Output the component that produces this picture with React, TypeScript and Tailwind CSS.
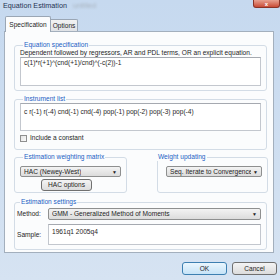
import { ReactNode } from "react";

function Group({
  label,
  className,
  legendClass,
  children,
}: {
  label: string;
  className?: string;
  legendClass?: string;
  children: ReactNode;
}) {
  return (
    <fieldset className={`border border-[#d3dce6] rounded-[3px] px-[5px] ${className ?? ""}`}>
      <legend className={`px-[1px] leading-[8px] text-[#1b5fc4] ${legendClass ?? "ml-[3px]"}`}>{label}</legend>
      {children}
    </fieldset>
  );
}

function Select({ value, className }: { value: string; className?: string }) {
  return (
    <div
      className={`flex items-center justify-between border border-[#8e8f8f] rounded-[2px] bg-gradient-to-b from-[#f3f3f3] to-[#dcdcdc] pl-[3px] pr-[3px] overflow-hidden whitespace-nowrap ${className ?? ""}`}
    >
      <span className="overflow-hidden min-w-0">{value}</span>
      <span className="text-[5px] text-[#222] pl-[2px] shrink-0">▼</span>
    </div>
  );
}

function Field({ text, className }: { text?: string; className?: string }) {
  return (
    <div
      className={`bg-white border border-[#c3c7ce] border-t-[#a5a9b0] pl-[3px] pt-[1px] whitespace-nowrap overflow-hidden ${className ?? ""}`}
    >
      {text}
    </div>
  );
}

export default function App() {
  return (
    <div className="w-[280px] h-[280px] overflow-hidden flex flex-col bg-gradient-to-b from-[#c6d9ef] to-[#d6e3f2] font-['Liberation_Sans',Arial,sans-serif] text-[6.6px] leading-[8px] text-[#1e1e1e]">
      <div className="h-[13px] flex justify-between items-start">
        <div className="pl-[3px] pt-[2px] text-[7.2px] text-[#1f3350] whitespace-nowrap">
          Equation Estimation <span className="ml-[4px] text-[#a9b4c0] blur-[1px]">untitled</span>
        </div>
        <div className="w-[27px] h-[8px] rounded-b-[3px] border border-t-0 border-[#8a3327] bg-gradient-to-b from-[#e7a090] to-[#c84a35] flex items-center justify-center text-white text-[6px] leading-[6px] font-bold">
          x
        </div>
      </div>

      <div className="pl-[4px] pt-[3px]">
        <div className="flex items-end h-[15px] pl-[1px]">
          <div className="relative z-10 -mb-px h-[16px] w-[46px] bg-[#fbfcfd] border border-b-0 border-[#9aa6b4] rounded-t-[2px] flex items-center justify-center">
            Specification
          </div>
          <div className="h-[12px] w-[27px] bg-gradient-to-b from-[#f2f2f2] to-[#dfe2e6] border border-b-0 border-l-0 border-[#9aa6b4] rounded-tr-[2px] flex items-center justify-center">
            Options
          </div>
        </div>
        <div className="w-[270px] h-[222px] border border-[#a3afbd] bg-[#fbfcfd] pl-[9px] pt-[9px]">
          <Group label="Equation specification" className="w-[253px] pb-[4px]">
            <div className="whitespace-nowrap">Dependent followed by regressors, AR and PDL terms, OR an explicit equation.</div>
            <Field text="c(1)*r(+1)^(cnd(+1)/cnd)^(-c(2))-1" className="h-[29px] w-[241px]" />
          </Group>

          <Group label="Instrument list" className="w-[253px] mt-[4px] pb-[7px]">
            <Field text="c  r(-1) r(-4) cnd(-1) cnd(-4) pop(-1) pop(-2) pop(-3) pop(-4)" className="h-[28px] w-[241px] pt-[4px]" />
            <div className="flex items-center mt-[3px]">
              <div className="w-[7px] h-[7px] border border-[#8f8f8f] bg-gradient-to-br from-[#e3e3e3] to-[#fbfbfb]" />
              <span className="ml-[3px]">Include a constant</span>
            </div>
          </Group>

          <div className="flex mt-[3px]">
            <Group label="Estimation weighting matrix" className="w-[112px] h-[40px]">
              <Select value="HAC (Newey-West)" className="w-[101px] h-[11px] mt-[5px]" />
              <div className="ml-[21px] mt-[2px] w-[51px] h-[12px] border border-[#707070] rounded-[3px] bg-gradient-to-b from-[#f4f4f4] to-[#dddddd] flex items-center justify-center">
                HAC options
              </div>
            </Group>
            <Group label="Weight updating" className="w-[111px] h-[40px] ml-[30px]" legendClass="-ml-[6px]">
              <Select value="Seq. Iterate to Convergence" className="w-[96px] h-[11px] mt-[5px] ml-[3px]" />
            </Group>
          </div>

          <Group label="Estimation settings" className="w-[253px] mt-[5px] pb-[4px] pl-[2px]">
            <div className="flex items-center mt-[2px]">
              <span className="w-[31px]">Method:</span>
              <Select value="GMM  -  Generalized Method of Moments" className="w-[213px] h-[12px]" />
            </div>
            <div className="flex items-center mt-[4px]">
              <span className="w-[31px]">Sample:</span>
              <Field text="1961q1 2005q4" className="w-[213px] h-[21px] pt-[3px]" />
            </div>
          </Group>
        </div>
      </div>

      <div className="flex justify-end gap-[5px] pr-[3px] mt-[9px]">
        <div className="w-[45px] h-[13px] border border-[#3c7fb1] rounded-[3px] bg-gradient-to-b from-[#eaf6fd] to-[#c6e3f7] flex items-center justify-center">
          OK
        </div>
        <div className="w-[45px] h-[13px] border border-[#707070] rounded-[3px] bg-gradient-to-b from-[#f4f4f4] to-[#dcdcdc] flex items-center justify-center">
          Cancel
        </div>
      </div>
    </div>
  );
}
